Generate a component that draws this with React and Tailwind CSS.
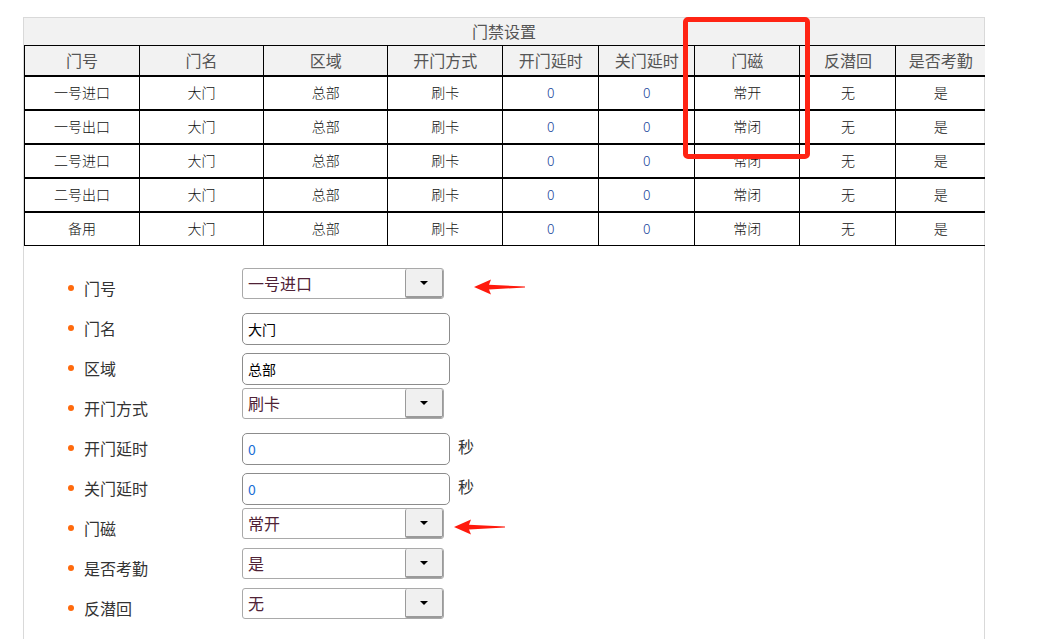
import React from 'react';

// 门禁列表数据
const doors = [
  { no: '一号进口', name: '大门', area: '总部', mode: '刷卡', openDelay: 0, closeDelay: 0, sensor: '常开', anti: '无', att: '是' },
  { no: '一号出口', name: '大门', area: '总部', mode: '刷卡', openDelay: 0, closeDelay: 0, sensor: '常闭', anti: '无', att: '是' },
  { no: '二号进口', name: '大门', area: '总部', mode: '刷卡', openDelay: 0, closeDelay: 0, sensor: '常闭', anti: '无', att: '是' },
  { no: '二号出口', name: '大门', area: '总部', mode: '刷卡', openDelay: 0, closeDelay: 0, sensor: '常闭', anti: '无', att: '是' },
  { no: '备用', name: '大门', area: '总部', mode: '刷卡', openDelay: 0, closeDelay: 0, sensor: '常闭', anti: '无', att: '是' },
];

const COLS = [
  { title: '门号', w: 'w-[115px]' },
  { title: '门名', w: 'w-[124px]' },
  { title: '区域', w: 'w-[124px]' },
  { title: '开门方式', w: 'w-[115px]' },
  { title: '开门延时', w: 'w-[96px]' },
  { title: '关门延时', w: 'w-[96px]' },
  { title: '门磁', w: 'w-[105px]' },
  { title: '反潜回', w: 'w-[96px]' },
  { title: '是否考勤', w: 'w-[89px]' },
];

// 表单字段
const FIELDS = [
  { label: '门号', type: 'select', value: '一号进口', arrow: 'far' },
  { label: '门名', type: 'text', value: '大门' },
  { label: '区域', type: 'text', value: '总部' },
  { label: '开门方式', type: 'select', value: '刷卡' },
  { label: '开门延时', type: 'text', value: '0', unit: '秒', num: true },
  { label: '关门延时', type: 'text', value: '0', unit: '秒', num: true },
  { label: '门磁', type: 'select', value: '常开', arrow: 'near' },
  { label: '是否考勤', type: 'select', value: '是' },
  { label: '反潜回', type: 'select', value: '无' },
];

function RedArrow() {
  return (
    <svg width="52" height="18" viewBox="0 0 52 18" className="block">
      <path d="M0 9 L17 1.5 L15 6.8 L51 8.4 L51 9.6 L15 11.4 L17 16.5 Z" fill="#ff1a0d" />
    </svg>
  );
}

function FakeSelect({ value }) {
  return (
    <div className="flex h-[31px] w-[202px] overflow-hidden rounded-[3px] border border-[#a9a9a9] bg-white">
      <div className="flex-1 pl-[5px] text-[16px] leading-[29px] text-[#4f2236]">{value}</div>
      <div className="flex w-[38px] items-center justify-center rounded-[2px] border-l border-b-2 border-r border-[#9a9a9a] bg-[#f0f0f0]">
        <div className="h-0 w-0 border-x-[4px] border-t-[4px] border-x-transparent border-t-black" />
      </div>
    </div>
  );
}

export default function App() {
  return (
    <div className="relative min-h-[639px] bg-white font-['SimSun','Noto_Sans_CJK_SC',sans-serif] text-[#222]">
      {/* 主面板 */}
      <div className="ml-[23px] pt-[17px]">
        <div className="min-h-[622px] w-[962px] border-x border-t border-[#d9d9d9]">
          <div className="h-[27px] bg-[#f2f2f2] text-center text-[16px] leading-[27px] text-[#555]">门禁设置</div>

          <table className="w-[961px] table-fixed border-collapse text-center">
            <thead>
              <tr className="h-[30px] bg-[#f2f2f2]">
                {COLS.map((c, i) => (
                  <th
                    key={c.title}
                    className={`${c.w} border-t border-b border-black text-[16px] font-normal text-[#555] ${i === 0 ? 'border-l' : ''} ${i < COLS.length - 1 ? 'border-r' : ''}`}
                  >
                    {c.title}
                  </th>
                ))}
              </tr>
            </thead>
            <tbody>
              {doors.map((d, idx) => (
                <tr key={idx} className="h-[34px] border-t-2 border-black text-[14px] font-light text-[#111]">
                  <td className="border-l border-r border-black">{d.no}</td>
                  <td className="border-r border-black">{d.name}</td>
                  <td className="border-r border-black">{d.area}</td>
                  <td className="border-r border-black">{d.mode}</td>
                  <td className="border-r border-black text-[#1d4a9e]">{d.openDelay}</td>
                  <td className="border-r border-black text-[#1d4a9e]">{d.closeDelay}</td>
                  <td className="border-r border-black">{d.sensor}</td>
                  <td className="border-r border-black">{d.anti}</td>
                  <td>{d.att}</td>
                </tr>
              ))}
              <tr className="h-0 border-t border-black"><td colSpan="9" className="p-0" /></tr>
            </tbody>
          </table>

          {/* 编辑表单 */}
          <div className="pl-[44px] pt-[22px]">
            {FIELDS.map((f) => (
              <div key={f.label} className="flex h-[40px] items-start">
                <div className="flex h-[40px] w-[174px] items-center">
                  <span className="mr-[10px] h-[6px] w-[6px] rounded-full bg-[#ff6a0d]" />
                  <span className="text-[16px] text-[#333]">{f.label}</span>
                </div>
                {f.type === 'select' ? (
                  <FakeSelect value={f.value} />
                ) : (
                  <div className="mt-[5px] flex h-[32px] w-[208px] items-center rounded-[5px] border border-[#8c8c8c] pl-[5px] text-[14px]">
                    <span className={f.num ? 'text-[#1d6fd6]' : 'text-black'}>{f.value}</span>
                  </div>
                )}
                {f.unit && <span className="ml-[8px] mt-[3px] text-[16px] leading-[30px] text-[#333]">{f.unit}</span>}
                {f.arrow === 'far' && <div className="ml-[30px] mt-[10px]"><RedArrow /></div>}
                {f.arrow === 'near' && <div className="ml-[10px] mt-[10px]"><RedArrow /></div>}
              </div>
            ))}
          </div>
        </div>
      </div>

      {/* 红色标注框 */}
      <div className="absolute left-[683px] top-[17px] h-[142px] w-[127px] rounded-[5px] border-[5px] border-[#ff2414]" />
    </div>
  );
}
